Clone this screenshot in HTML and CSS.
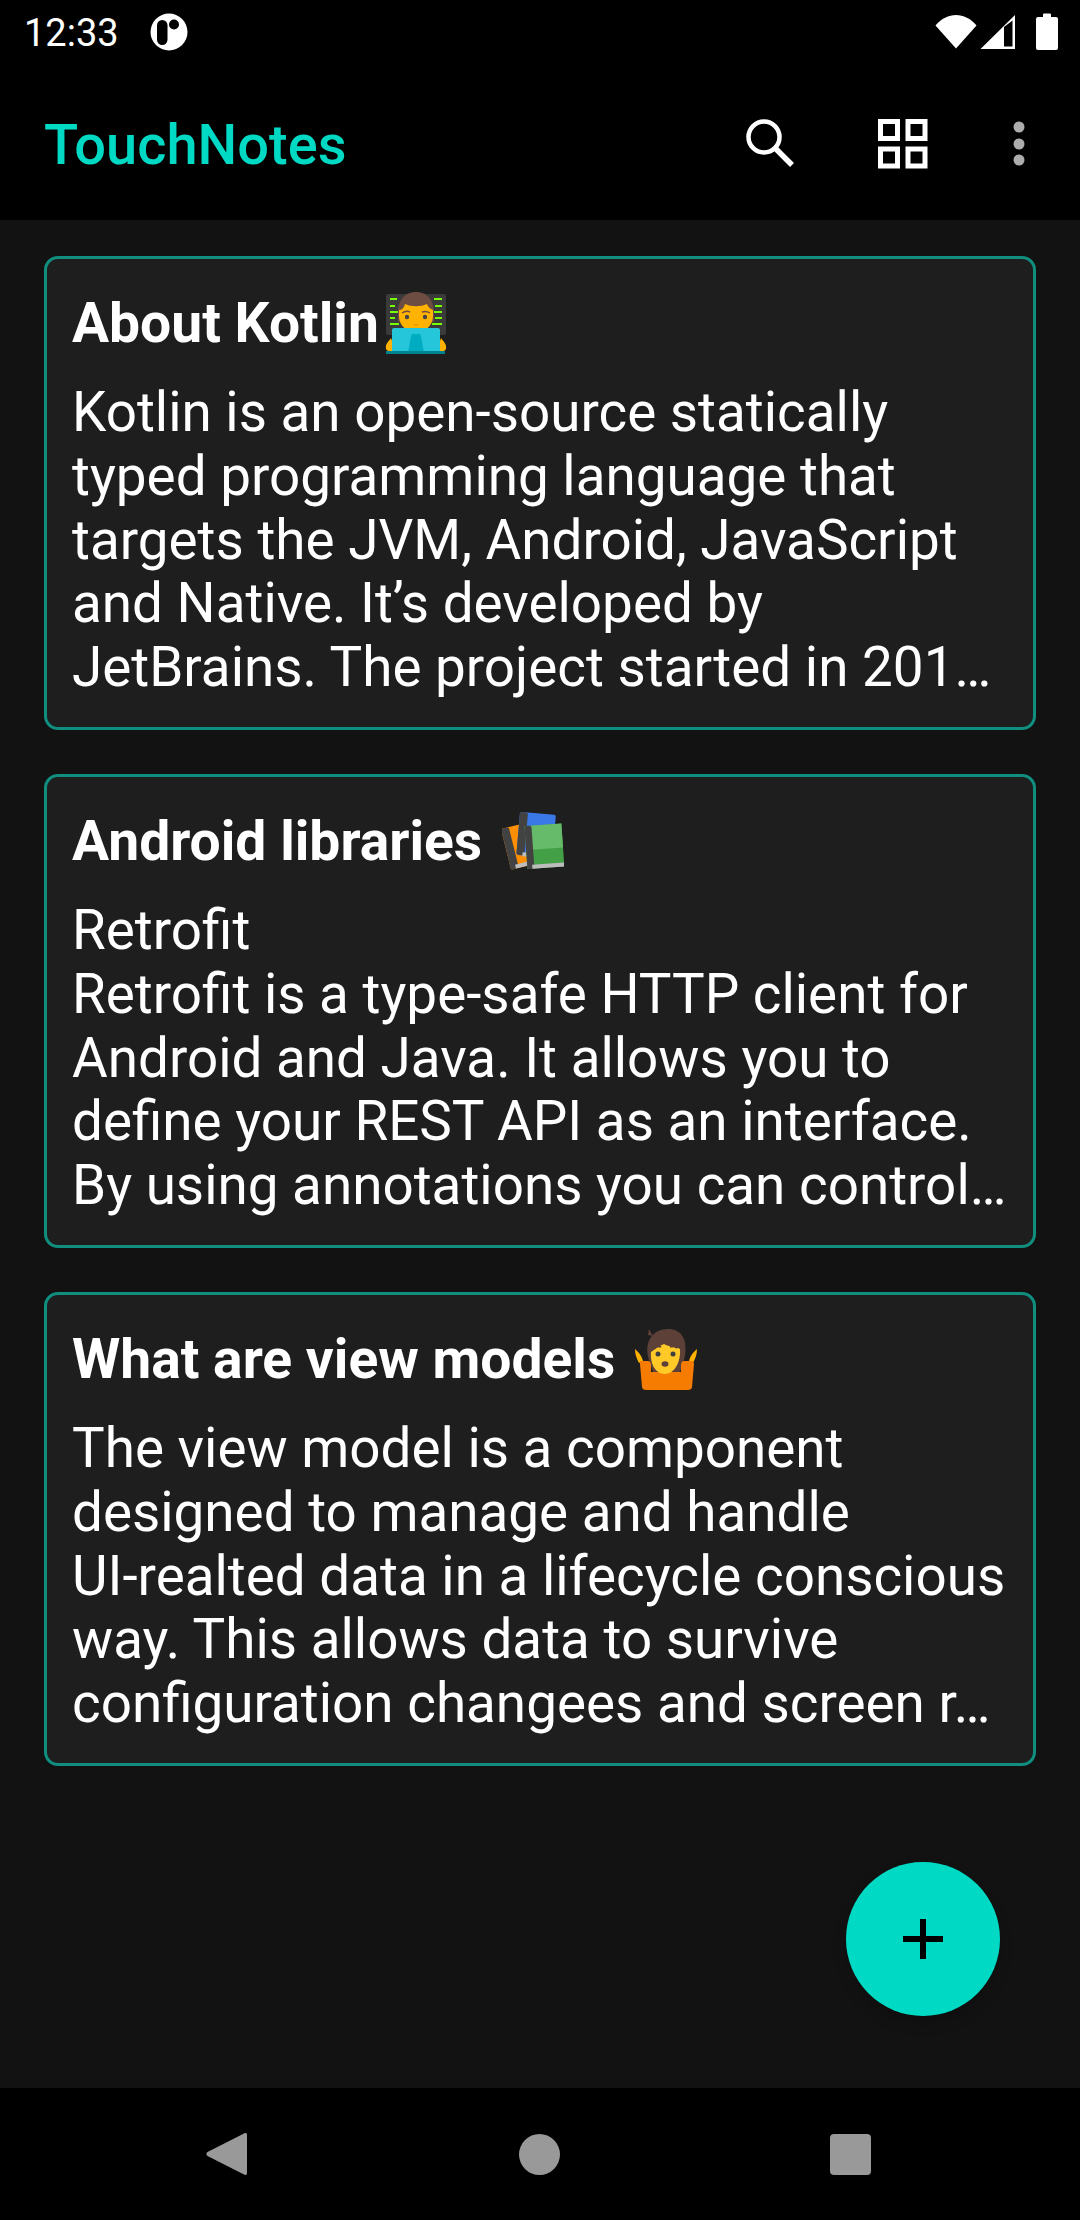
FILE: index.html
```html
<!DOCTYPE html>
<html lang="en">
<head>
<meta charset="utf-8">
<title>TouchNotes</title>
<link rel="stylesheet" href="styles.css">
</head>
<body>
<div class="screen">
  <div class="status">
    <span class="time">12:33</span>
    <svg class="status-app" width="38" height="38" viewBox="0 0 38 38"><circle cx="19" cy="19" r="18.5" fill="#fff"/><rect x="7" y="7" width="10.500" height="25" rx="5.200" fill="#000"/><circle cx="24" cy="11.500" r="5" fill="#000"/></svg>
    <svg class="wifi" width="42" height="35" viewBox="0 0 42 35"><path d="M0.5 11.5C12 -2.5 30 -2.5 41.5 11.5L21 34.5Z" fill="#fff"/></svg>
    <svg class="signal" width="36" height="36" viewBox="0 0 36 36"><path fill-rule="evenodd" d="M35 1V35H0.5ZM32.5 32.5H24V13L32.5 6.5Z" fill="#fff"/></svg>
    <svg class="battery" width="22" height="37" viewBox="0 0 22 37"><path d="M7 1.5a1 1 0 0 1 1-1h6a1 1 0 0 1 1 1V4h5a2 2 0 0 1 2 2v29a2 2 0 0 1-2 2H2a2 2 0 0 1-2-2V6a2 2 0 0 1 2-2h5Z" fill="#fff"/></svg>
  </div>
  <header class="toolbar">
    <h1 class="app-title">TouchNotes</h1>
    <svg class="tool-search" width="48" height="48" viewBox="0 0 48 48"><circle cx="18" cy="18" r="15.5" fill="none" stroke="#fff" stroke-width="4.5"/><path d="M29 29L46 46" stroke="#fff" stroke-width="5.5" fill="none"/></svg>
    <svg class="tool-grid" width="50" height="50" viewBox="0 0 50 50"><g fill="none" stroke="#fff" stroke-width="5"><rect x="2.500" y="2.500" width="17" height="17"/><rect x="30" y="2.500" width="17" height="17"/><rect x="2.500" y="30" width="17" height="17"/><rect x="30" y="30" width="17" height="17"/></g></svg>
    <svg class="tool-more" width="12" height="46" viewBox="0 0 12 46"><g fill="#adadad"><circle cx="6" cy="6" r="5.500"/><circle cx="6" cy="23" r="5.500"/><circle cx="6" cy="39" r="5.500"/></g></svg>
  </header>
  <main class="notes">
    <article class="note">
      <h2 class="note-title">About Kotlin<svg class="emoji" width="62" height="62" viewBox="0 0 62 62">
        <rect x="1" y="2" width="60" height="41" rx="2" fill="#3a3a3a"/>
        <g fill="#76ff03"><rect x="5" y="6" width="7" height="2"/><rect x="5" y="13" width="5" height="2"/><rect x="5" y="19" width="8" height="2"/><rect x="5" y="25" width="5" height="2"/><rect x="5" y="31" width="9" height="2"/><rect x="49" y="6" width="8" height="2"/><rect x="50" y="13" width="7" height="2"/><rect x="49" y="19" width="8" height="2"/><rect x="50" y="25" width="7" height="2"/><rect x="47" y="31" width="10" height="2"/></g>
        <path d="M13 24C12 8 20 0 31 0s19 8 18 24v6H13Z" fill="#6d4c41"/>
        <path d="M14 18c3 0 5-2 6-6 7 3 15 3 22 0 1 3 3 5 6 6v6c0 10-8 16-17 16s-17-6-17-16Z" fill="#ffb300"/>
        <circle cx="22" cy="25" r="2.200" fill="#444"/><circle cx="40" cy="25" r="2.200" fill="#444"/>
        <path d="M17 21c3-2 6-2 8-1M37 20c3-1 5-1 8 1" stroke="#6d4c41" stroke-width="1.500" fill="none"/>
        <path d="M28 32h6l-3 2Z" fill="#e59600"/>
        <path d="M6 46c-2 3-6 6-5 11 1 3 7 3 9 1Z" fill="#ffb300"/><path d="M56 46c2 3 6 6 5 11-1 3-7 3-9 1Z" fill="#ffb300"/>
        <rect x="7" y="36" width="48" height="25" rx="2" fill="#26c6da"/>
        <path d="M26 44c0-1 1-2 2-2h6c1 0 2 1 2 2l3 17H23Z" fill="#00acc1"/>
        <rect x="1" y="59" width="59" height="3" fill="#00838f"/>
      </svg></h2>
      <p class="note-body">Kotlin is an open-source statically<br>typed programming language that<br>targets the JVM, Android, JavaScript<br>and Native. It’s developed by<br>JetBrains. The project started in 201…</p>
    </article>
    <article class="note">
      <h2 class="note-title">Android libraries <svg class="emoji" width="62" height="60" viewBox="0 0 62 60">
        <g transform="rotate(-14 14 36)"><rect x="4" y="14" width="22" height="42" rx="2" fill="#ff8f00"/><rect x="4" y="14" width="8" height="42" rx="2" fill="#424242"/><rect x="9" y="52" width="17" height="4" fill="#bdbdbd"/></g>
        <g transform="rotate(5 30 24)"><rect x="16" y="1" width="36" height="43" rx="2" fill="#3b78e7"/><rect x="16" y="1" width="8" height="43" rx="2" fill="#424242"/><rect x="22" y="41" width="16" height="4" fill="#bdbdbd"/></g>
        <g transform="rotate(-4 40 36)"><rect x="24" y="13" width="37" height="43" fill="#43a047"/><rect x="30" y="13" width="31" height="24" fill="#66bb6a"/><rect x="24" y="13" width="7" height="43" rx="2" fill="#424242"/><rect x="29" y="52" width="32" height="4" fill="#bdbdbd"/></g>
      </svg></h2>
      <p class="note-body">Retrofit<br>Retrofit is a type-safe HTTP client for<br>Android and Java. It allows you to<br>define your REST API as an interface.<br>By using annotations you can control…</p>
    </article>
    <article class="note">
      <h2 class="note-title">What are view models <svg class="emoji" width="62" height="62" viewBox="0 0 62 62">
        <path d="M14 32C8 14 18 1 33 1c13 0 21 10 16 31l-4 12H18Z" fill="#5d4037"/>
        <path d="M14 1l-1 6 5 1Z" fill="#5d4037"/>
        <path d="M0 21c3 3 6 5 8 12l-4 2C2 31 0 27 0 21Z" fill="#ffb300"/>
        <path d="M62 21c-3 3-6 5-8 12l4 2C60 31 62 27 62 21Z" fill="#ffb300"/>
        <path d="M5 33h8c2 0 3 2 3 4l0 7h30v-7c0-2 1-4 3-4h8c1 0 2 2 2 3l-2 23c0 2-2 3-4 3H11c-2 0-4-1-4-3L5 36Z" fill="#f57c00"/>
        <path d="M16 24c3-2 8-6 13-8 5 3 12 3 16 5 1 12-5 25-15 25S15 35 16 24Z" fill="#ffca28"/>
        <circle cx="23" cy="26" r="2.500" fill="#404040"/><circle cx="38" cy="26" r="2.500" fill="#404040"/>
        <path d="M18 20c3-2 6-2 8-1M35 19c3-1 5-1 7 1" stroke="#5d4037" stroke-width="1.800" fill="none"/>
        <ellipse cx="30" cy="36" rx="3.500" ry="2.800" fill="#5d4037"/>
      </svg></h2>
      <p class="note-body">The view model is a component<br>designed to manage and handle<br>UI-realted data in a lifecycle conscious<br>way. This allows data to survive<br>configuration changees and screen r…</p>
    </article>
  </main>
  <nav class="navbar">
    <svg width="42" height="44" viewBox="0 0 42 44"><path d="M38 1.500c1.500-1 3-.5 3 1.500v38c0 2-1.500 2.500-3 1.500L1.500 24c-1.500-1-1.500-3 0-4Z" fill="#999"/></svg>
    <span class="nav-home"></span>
    <span class="nav-recents"></span>
  </nav>
  <button class="fab" aria-label="Add note"><svg width="40" height="40" viewBox="0 0 40 40"><path d="M17 0h6v17h17v6H23v17h-6V23H0v-6h17Z" fill="#000"/></svg></button>
</div>
</body>
</html>
```
FILE: styles.css
```css
* { box-sizing: border-box; }
html, body { margin: 0; padding: 0; }
body { background: #000; font-family: Roboto, "Liberation Sans", sans-serif; color: #fff; }
.screen { position: relative; width: 1080px; height: 2220px; display: flex; flex-direction: column; background: #000; overflow: hidden; }

.status { height: 63px; flex: none; display: flex; align-items: center; padding: 2px 22px 0 24px; }
.time { width: 96px; font-size: 38px; line-height: 1; margin-top: 0; color: #fff; }
.status-app { margin-left: 30px; margin-top: -2px; }
.wifi { margin-left: auto; margin-top: -2px; }
.signal { margin-left: 3px; margin-top: -2px; }
.battery { margin-left: 20px; margin-top: -2px; }

.toolbar { height: 157px; flex: none; display: flex; align-items: center; padding-left: 44px; }
.app-title { margin: 6px auto 0 0; font-size: 56px; font-weight: 500; line-height: 1; color: #00dac4; }
.tool-search { margin-top: 2px; }
.tool-grid { margin-left: 84px; margin-top: 4px; }
.tool-more { margin-left: 85px; margin-right: 55px; margin-top: 4px; }

.notes { flex: 1; background: #121212; padding: 36px 44px 0; display: flex; flex-direction: column; gap: 44px; }
.note { height: 474px; background: #1e1e1e; border: 3px solid #108e80; border-radius: 14px; padding: 0 25px; }
.note-title { margin: 0; height: 90px; padding-top: 33px; font-size: 55.2px; font-weight: 700; line-height: 62px; white-space: nowrap; }
.emoji { vertical-align: -12px; margin-left: 6px; }
.note-body { margin: 0; padding-top: 32px; font-size: 54.8px; line-height: 63.75px; white-space: nowrap; }

.navbar { height: 132px; flex: none; display: flex; align-items: center; padding: 0 209px 0 206px; justify-content: space-between; }
.nav-home { width: 41px; height: 41px; border-radius: 50%; background: #999; }
.nav-recents { width: 41px; height: 41px; border-radius: 4px; background: #999; }

.fab { position: absolute; left: 846px; top: 1862px; width: 154px; height: 154px; border: 0; padding: 0; border-radius: 50%; background: #00dac4; display: flex; align-items: center; justify-content: center; box-shadow: 0 8px 14px rgba(0,0,0,.18); }
```
